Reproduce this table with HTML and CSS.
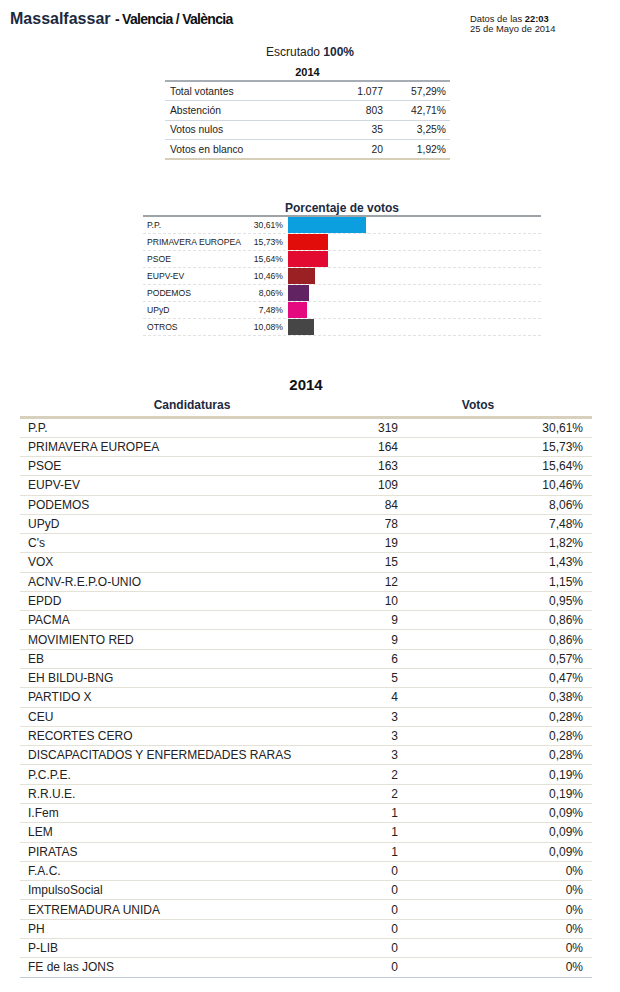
FILE: index.html
```html
<!DOCTYPE html>
<html lang="es">
<head>
<meta charset="utf-8">
<title>Massalfassar - Valencia / València</title>
<link rel="stylesheet" href="styles.css">
</head>
<body>
<header class="top">
  <h1 class="title"><span class="town">Massalfassar</span> <span class="prov">- Valencia / València</span></h1>
  <div class="stamp">
    <div>Datos de las <b>22:03</b></div>
    <div>25 de Mayo de 2014</div>
  </div>
</header>

<p class="escrutado">Escrutado <b>100%</b></p>

<table class="summary">
  <caption>2014</caption>
  <tbody>
    <tr><td class="lbl">Total votantes</td><td class="num">1.077</td><td class="pct">57,29%</td></tr>
    <tr><td class="lbl">Abstención</td><td class="num">803</td><td class="pct">42,71%</td></tr>
    <tr><td class="lbl">Votos nulos</td><td class="num">35</td><td class="pct">3,25%</td></tr>
    <tr><td class="lbl">Votos en blanco</td><td class="num">20</td><td class="pct">1,92%</td></tr>
  </tbody>
</table>

<section class="chart">
  <h2 class="chart-title">Porcentaje de votos</h2>
  <div class="bars">
    <div class="bar-row"><span class="b-lbl">P.P.</span><span class="b-pct">30,61%</span><span class="b-track"><span class="bar pp" style="width:78px"></span></span></div>
    <div class="bar-row"><span class="b-lbl">PRIMAVERA EUROPEA</span><span class="b-pct">15,73%</span><span class="b-track"><span class="bar pe" style="width:40px"></span></span></div>
    <div class="bar-row"><span class="b-lbl">PSOE</span><span class="b-pct">15,64%</span><span class="b-track"><span class="bar psoe" style="width:40px"></span></span></div>
    <div class="bar-row"><span class="b-lbl">EUPV-EV</span><span class="b-pct">10,46%</span><span class="b-track"><span class="bar eupv" style="width:27px"></span></span></div>
    <div class="bar-row"><span class="b-lbl">PODEMOS</span><span class="b-pct">8,06%</span><span class="b-track"><span class="bar podemos" style="width:21px"></span></span></div>
    <div class="bar-row"><span class="b-lbl">UPyD</span><span class="b-pct">7,48%</span><span class="b-track"><span class="bar upyd" style="width:19px"></span></span></div>
    <div class="bar-row"><span class="b-lbl">OTROS</span><span class="b-pct">10,08%</span><span class="b-track"><span class="bar otros" style="width:26px"></span></span></div>
  </div>
</section>

<section class="results">
  <h2 class="year">2014</h2>
  <table class="res">
    <thead>
      <tr><th class="h-cand">Candidaturas</th><th class="h-votos" colspan="2">Votos</th></tr>
    </thead>
    <tbody>
      <tr><td class="c">P.P.</td><td class="v">319</td><td class="p">30,61%</td></tr>
      <tr><td class="c">PRIMAVERA EUROPEA</td><td class="v">164</td><td class="p">15,73%</td></tr>
      <tr><td class="c">PSOE</td><td class="v">163</td><td class="p">15,64%</td></tr>
      <tr><td class="c">EUPV-EV</td><td class="v">109</td><td class="p">10,46%</td></tr>
      <tr><td class="c">PODEMOS</td><td class="v">84</td><td class="p">8,06%</td></tr>
      <tr><td class="c">UPyD</td><td class="v">78</td><td class="p">7,48%</td></tr>
      <tr><td class="c">C's</td><td class="v">19</td><td class="p">1,82%</td></tr>
      <tr><td class="c">VOX</td><td class="v">15</td><td class="p">1,43%</td></tr>
      <tr><td class="c">ACNV-R.E.P.O-UNIO</td><td class="v">12</td><td class="p">1,15%</td></tr>
      <tr><td class="c">EPDD</td><td class="v">10</td><td class="p">0,95%</td></tr>
      <tr><td class="c">PACMA</td><td class="v">9</td><td class="p">0,86%</td></tr>
      <tr><td class="c">MOVIMIENTO RED</td><td class="v">9</td><td class="p">0,86%</td></tr>
      <tr><td class="c">EB</td><td class="v">6</td><td class="p">0,57%</td></tr>
      <tr><td class="c">EH BILDU-BNG</td><td class="v">5</td><td class="p">0,47%</td></tr>
      <tr><td class="c">PARTIDO X</td><td class="v">4</td><td class="p">0,38%</td></tr>
      <tr><td class="c">CEU</td><td class="v">3</td><td class="p">0,28%</td></tr>
      <tr><td class="c">RECORTES CERO</td><td class="v">3</td><td class="p">0,28%</td></tr>
      <tr><td class="c">DISCAPACITADOS Y ENFERMEDADES RARAS</td><td class="v">3</td><td class="p">0,28%</td></tr>
      <tr><td class="c">P.C.P.E.</td><td class="v">2</td><td class="p">0,19%</td></tr>
      <tr><td class="c">R.R.U.E.</td><td class="v">2</td><td class="p">0,19%</td></tr>
      <tr><td class="c">I.Fem</td><td class="v">1</td><td class="p">0,09%</td></tr>
      <tr><td class="c">LEM</td><td class="v">1</td><td class="p">0,09%</td></tr>
      <tr><td class="c">PIRATAS</td><td class="v">1</td><td class="p">0,09%</td></tr>
      <tr><td class="c">F.A.C.</td><td class="v">0</td><td class="p">0%</td></tr>
      <tr><td class="c">ImpulsoSocial</td><td class="v">0</td><td class="p">0%</td></tr>
      <tr><td class="c">EXTREMADURA UNIDA</td><td class="v">0</td><td class="p">0%</td></tr>
      <tr><td class="c">PH</td><td class="v">0</td><td class="p">0%</td></tr>
      <tr><td class="c">P-LIB</td><td class="v">0</td><td class="p">0%</td></tr>
      <tr><td class="c">FE de las JONS</td><td class="v">0</td><td class="p">0%</td></tr>
    </tbody>
  </table>
</section>
</body>
</html>
```

FILE: styles.css
```css
* { box-sizing: border-box; }

html, body {
  margin: 0;
  padding: 0;
  background: #ffffff;
}

body {
  font-family: "Liberation Sans", Arial, sans-serif;
  color: #222222;
  width: 620px;
}

/* header */
.top {
  display: flex;
  justify-content: space-between;
  align-items: flex-start;
  height: 36px;
  padding: 9px 0 0 10px;
}

.title {
  margin: 0;
  font-size: 16px;
  line-height: 20px;
  font-weight: bold;
  white-space: nowrap;
}

.town {
  color: #1b2a40;
  font-size: 16px;
}

.prov {
  color: #111111;
  font-size: 14px;
  letter-spacing: -0.7px;
}

.stamp {
  width: 150px;
  padding-top: 5px;
  font-size: 9.4px;
  line-height: 10px;
  color: #222222;
}

.stamp b { color: #111; }

/* escrutado */
.escrutado {
  margin: 9px 0 0;
  text-align: center;
  font-size: 12px;
  line-height: 14px;
  color: #222;
}

.escrutado b { color: #1b2a40; }

/* summary table */
.summary {
  margin: 6px 0 0 165px;
  width: 285px;
  border-collapse: collapse;
  font-size: 10.3px;
  color: #222;
}

.summary caption {
  font-size: 11px;
  font-weight: bold;
  line-height: 14px;
  color: #111;
  text-align: center;
  padding: 0 0 1px 0;
}

.summary tbody {
  border-top: 2px solid #a6adb4;
  border-bottom: 2px solid #d6ceb6;
}

.summary td {
  height: 19.6px;
  padding: 0;
  border-bottom: 1px solid #cfd8e0;
  vertical-align: middle;
}

.summary tr:last-child td { border-bottom: none; }

.summary .lbl { padding-left: 5px; }

.summary .num {
  width: 80px;
  text-align: right;
  padding-right: 4px;
}

.summary .pct {
  width: 63px;
  text-align: right;
  padding-right: 4px;
}

/* bar chart */
.chart {
  margin: 42px 0 0 143px;
  width: 398px;
}

.chart-title {
  margin: 0;
  font-size: 12px;
  line-height: 13px;
  font-weight: bold;
  text-align: center;
  color: #1b2a40;
  border-bottom: 2px solid #9ea3a8;
}

.bar-row {
  display: flex;
  align-items: center;
  height: 17px;
  border-bottom: 1px dashed #e2e2e2;
  font-size: 8.6px;
  color: #222;
}

.b-lbl {
  width: 94px;
  padding-left: 4px;
  white-space: nowrap;
}

.b-pct {
  width: 46px;
  text-align: right;
}

.b-track {
  flex: 1;
  padding-left: 5px;
  display: flex;
  align-items: center;
}

.bar {
  display: block;
  height: 16px;
}

.pp { background: #0c9fe0; }
.pe { background: #e00d0a; }
.psoe { background: #e30a31; }
.eupv { background: #9a2024; }
.podemos { background: #612362; }
.upyd { background: #e4097f; }
.otros { background: #464646; }

/* results table */
.results {
  margin: 40px 0 0 20px;
  width: 572px;
}

.year {
  margin: 0;
  font-size: 15px;
  line-height: 18px;
  font-weight: bold;
  text-align: center;
  color: #111;
}

.res {
  margin-top: 4px;
  width: 572px;
  border-collapse: collapse;
  font-size: 12px;
  color: #222;
}

.res thead tr { border-bottom: 3px solid #d6d0bc; }

.res th {
  font-size: 12px;
  font-weight: bold;
  color: #1b2a40;
  height: 18px;
  line-height: 14px;
  padding: 0 0 4px;
  text-align: center;
}

.h-cand { width: 344px; }

.res tbody { border-bottom: 1px solid #bfcbd8; }

.res td {
  height: 19.29px;
  padding: 0;
  border-bottom: 1px solid #e4e1d6;
  vertical-align: middle;
}

.res tbody tr:last-child td { border-bottom: none; }

.res .c { padding-left: 8px; }

.res .v {
  width: 46px;
  text-align: right;
  padding-right: 12px;
}

.res .p {
  text-align: right;
  padding-right: 9px;
}
```
